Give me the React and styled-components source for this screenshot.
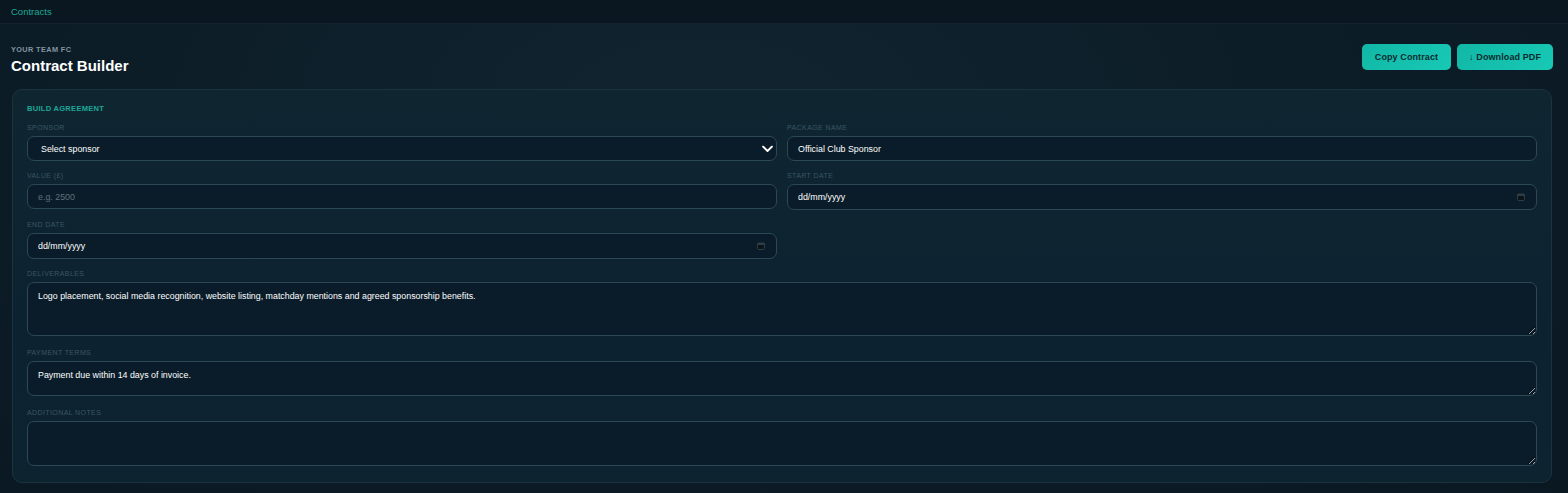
import React from "react";
import styled, { createGlobalStyle } from "styled-components";

const GlobalStyle = createGlobalStyle`
  html, body {
    margin: 0;
    padding: 0;
  }
  body {
    min-height: 100vh;
    background: radial-gradient(ellipse at 45% 20%, #10242f 0%, #0c1c27 55%, #0a1822 100%);
    font-family: "Liberation Sans", Arial, sans-serif;
    color: #ffffff;
  }
`;

const TopBar = styled.div`
  height: 23px;
  display: flex;
  align-items: center;
  padding: 0 11px;
  border-bottom: 1px solid #13242e;
  background: #0a1720;
  font-size: 9.5px;
  color: #1fa997;
`;

const Main = styled.div`
  padding: 20px 16px 10px 12px;
  display: flex;
  flex-direction: column;
  gap: 15px;
`;

const Header = styled.div`
  display: flex;
  justify-content: space-between;
  align-items: flex-start;
`;

const TitleBlock = styled.div`
  display: flex;
  flex-direction: column;
  gap: 3px;
  padding-top: 1px;
  margin-left: -1px;
`;

const Eyebrow = styled.div`
  font-size: 7.3px;
  line-height: 9px;
  font-weight: 700;
  letter-spacing: 0.4px;
  color: #8295a0;
`;

const Title = styled.h1`
  margin: 0;
  font-size: 15px;
  line-height: 17px;
  font-weight: 700;
  color: #ffffff;
`;

const Actions = styled.div`
  display: flex;
  gap: 6px;
  margin-right: -1px;
`;

const ActionButton = styled.button`
  height: 26px;
  padding: 0 ${(p) => p.$pad}px;
  border: none;
  border-radius: 5px;
  background: linear-gradient(135deg, #12b7a6 0%, #17c9b5 100%);
  color: #0c2a2f;
  font-family: "Liberation Sans", Arial, sans-serif;
  font-size: 9px;
  font-weight: 700;
  letter-spacing: 0.1px;
  cursor: pointer;
`;

const Card = styled.section`
  border: 1px solid #1a333e;
  border-radius: 10px;
  background: linear-gradient(180deg, #0f2631 0%, #0d2230 60%, #0e2330 100%);
  padding: 14px 14px 16px 14px;
  display: flex;
  flex-direction: column;
  gap: 10px;
`;

const SectionTitle = styled.div`
  font-size: 7.5px;
  line-height: 9px;
  font-weight: 700;
  letter-spacing: 0.3px;
  color: #1ea797;
`;

const Grid = styled.div`
  display: grid;
  grid-template-columns: 1fr 1fr;
  column-gap: 10px;
  row-gap: 10px;
`;

const Field = styled.div`
  display: flex;
  flex-direction: column;
  gap: 4px;
  grid-column: ${(p) => (p.$wide ? "1 / -1" : "auto")};
  margin-top: ${(p) => p.$shift || 0}px;
`;

const Label = styled.label`
  font-size: 7px;
  line-height: 9px;
  letter-spacing: 0.4px;
  color: #3a5664;
  text-transform: uppercase;
`;

const ControlWrap = styled.div`
  position: relative;
`;

const Input = styled.input`
  box-sizing: border-box;
  width: 100%;
  height: ${(p) => p.$h || 25}px;
  padding: 0 ${(p) => p.$padLeft || 10}px;
  border: 1px solid #2b4955;
  border-radius: 7px;
  background: #0a1c29;
  color: #ffffff;
  font-family: "Liberation Sans", Arial, sans-serif;
  font-size: 8.85px;
  outline: none;
  &::placeholder {
    color: #5d717c;
  }
`;

const TextArea = styled.textarea`
  display: block;
  box-sizing: border-box;
  width: 100%;
  height: ${(p) => p.$h}px;
  padding: 7px 10px;
  border: 1px solid #2b4955;
  border-radius: 7px;
  background: #0a1c29;
  color: #ffffff;
  font-family: "Liberation Sans", Arial, sans-serif;
  font-size: 8.85px;
  line-height: 12px;
  resize: vertical;
  outline: none;
`;

const Overlay = styled.span`
  position: absolute;
  right: ${(p) => p.$right}px;
  top: 50%;
  transform: translateY(-50%);
  display: flex;
  pointer-events: none;
`;

const Chevron = () => (
  <svg width="11" height="7" viewBox="0 0 11 7" fill="none">
    <path d="M1 1l4.5 4.5L10 1" stroke="#ffffff" strokeWidth="1.8" strokeLinecap="round" strokeLinejoin="round" />
  </svg>
);

const CalendarIcon = () => (
  <svg width="8" height="8" viewBox="0 0 8 8" fill="none">
    <rect x="0.5" y="1" width="7" height="6.5" rx="1" fill="#0b1419" stroke="#2f3d45" />
    <rect x="0.5" y="1" width="7" height="2" fill="#2f3d45" />
  </svg>
);

const DateField = ({ label }) => (
  <Field>
    <Label>{label}</Label>
    <ControlWrap>
      <Input type="text" readOnly value="dd/mm/yyyy" $h={26} />
      <Overlay $right={12}>
        <CalendarIcon />
      </Overlay>
    </ControlWrap>
  </Field>
);

export default function App() {
  return (
    <>
      <GlobalStyle />
      <TopBar>Contracts</TopBar>
      <Main>
        <Header>
          <TitleBlock>
            <Eyebrow>YOUR TEAM FC</Eyebrow>
            <Title>Contract Builder</Title>
          </TitleBlock>
          <Actions>
            <ActionButton $pad={13}>Copy Contract</ActionButton>
            <ActionButton $pad={12}>↓ Download PDF</ActionButton>
          </Actions>
        </Header>
        <Card>
          <SectionTitle>BUILD AGREEMENT</SectionTitle>
          <Grid>
            <Field>
              <Label>Sponsor</Label>
              <ControlWrap>
                <Input type="text" readOnly value="Select sponsor" $padLeft={13} />
                <Overlay $right={4}>
                  <Chevron />
                </Overlay>
              </ControlWrap>
            </Field>
            <Field>
              <Label>Package name</Label>
              <Input type="text" defaultValue="Official Club Sponsor" />
            </Field>
            <Field>
              <Label>Value (£)</Label>
              <Input type="text" placeholder="e.g. 2500" />
            </Field>
            <DateField label="Start date" />
            <DateField label="End date" />
            <div />
            <Field $wide>
              <Label>Deliverables</Label>
              <TextArea
                $h={54}
                defaultValue="Logo placement, social media recognition, website listing, matchday mentions and agreed sponsorship benefits."
              />
            </Field>
            <Field $wide $shift={2}>
              <Label>Payment terms</Label>
              <TextArea $h={35} defaultValue="Payment due within 14 days of invoice." />
            </Field>
            <Field $wide $shift={2}>
              <Label>Additional notes</Label>
              <TextArea $h={45} defaultValue="" />
            </Field>
          </Grid>
        </Card>
      </Main>
    </>
  );
}
